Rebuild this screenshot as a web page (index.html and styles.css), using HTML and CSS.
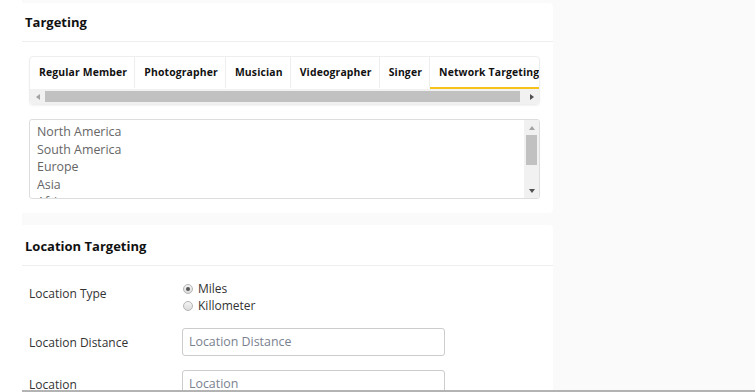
FILE: index.html
```html
<!DOCTYPE html>
<html lang="en">
<head>
    <meta charset="UTF-8">
    <meta name="viewport" content="width=device-width, initial-scale=1.0">
    <title>Targeting</title>
    <link rel="stylesheet" href="styles.css">
</head>
<body>
    <div class="side"></div>
    <div class="main">
        <div class="card">
            <div class="card-head">Targeting</div>
            <div class="card-body">
                <div class="tabs-box">
                    <div class="tabs">
                        <div class="tab">Regular Member</div>
                        <div class="tab">Photographer</div>
                        <div class="tab">Musician</div>
                        <div class="tab">Videographer</div>
                        <div class="tab">Singer</div>
                        <div class="tab active">Network Targeting</div>
                    </div>
                    <div class="hscroll">
                        <span class="arrow arrow-left"></span>
                        <span class="hthumb"></span>
                        <span class="arrow arrow-right"></span>
                    </div>
                </div>

                <div class="listbox">
                    <div class="options">
                        <div class="option">North America</div>
                        <div class="option">South America</div>
                        <div class="option">Europe</div>
                        <div class="option">Asia</div>
                        <div class="option">Africa</div>
                    </div>
                    <div class="vscroll">
                        <span class="arrow arrow-up"></span>
                        <span class="vthumb"></span>
                        <span class="vtrack"></span>
                        <span class="arrow arrow-down"></span>
                    </div>
                </div>
            </div>
        </div>

        <div class="card">
            <div class="card-head tall">Location Targeting</div>
            <div class="card-body form">
                <div class="form-row top">
                    <div class="label">Location Type</div>
                    <div class="radios">
                        <div class="radio"><span class="dot checked"></span>Miles</div>
                        <div class="radio"><span class="dot"></span>Killometer</div>
                    </div>
                </div>
                <div class="form-row">
                    <div class="label">Location Distance</div>
                    <div class="input">Location Distance</div>
                </div>
                <div class="form-row">
                    <div class="label">Location</div>
                    <div class="input">Location</div>
                </div>
            </div>
        </div>
    </div>
    <div class="bottom-edge"></div>
</body>
</html>
```

FILE: styles.css
```css
body {
    margin: 0;
    display: flex;
    height: 392px;
    overflow: hidden;
    background: #fafafa;
    font-family: "Open Sans", Arial, sans-serif;
    color: #333;
}
.side {
    width: 22px;
    background: #fff;
}
.main {
    width: 531px;
    padding-top: 3px;
}
.card {
    background: #fff;
    border-radius: 0 4px 4px 0;
    margin-bottom: 12px;
}
.card-head {
    height: 38px;
    line-height: 39px;
    padding-left: 3px;
    font-size: 13px;
    font-weight: 700;
    color: #111;
    border-bottom: 1px solid #eee;
}
.card-head.tall {
    height: 40px;
    line-height: 43px;
}
.card-body {
    padding: 14px 13px 14px 7px;
}

/* tabs */
.tabs-box {
    border: 1px solid #eee;
    border-radius: 4px;
    box-shadow: 0 1px 2px rgba(0, 0, 0, 0.05);
    overflow: hidden;
}
.tabs {
    display: flex;
    height: 32px;
}
.tab {
    padding: 0 7px 0 9px;
    line-height: 30px;
    font-size: 10.4px;
    font-weight: 700;
    letter-spacing: 0.15px;
    color: #111;
    border-right: 1px solid #eee;
    border-bottom: 2px solid transparent;
    white-space: nowrap;
}
.tab.active {
    border-right: none;
    border-bottom-color: #f6c31c;
    flex: 1;
}
.hscroll {
    display: flex;
    align-items: center;
    height: 15px;
    background: #f1f1f1;
}
.hthumb {
    flex: 1;
    height: 11px;
    background: #c1c1c1;
    margin-right: 4px;
}
.arrow {
    width: 15px;
    height: 15px;
    display: flex;
    align-items: center;
    justify-content: center;
}
.arrow::before {
    content: "";
    border: 3px solid transparent;
}
.arrow-left::before {
    border-right: 4px solid #a3a3a3;
    border-left: none;
}
.arrow-right::before {
    border-left: 4px solid #505050;
    border-right: none;
}
.arrow-up::before {
    border-bottom: 4px solid #a3a3a3;
    border-top: none;
}
.arrow-down::before {
    border-top: 4px solid #505050;
    border-bottom: none;
}

/* list */
.listbox {
    display: flex;
    margin-top: 14px;
    height: 80px;
    box-sizing: border-box;
    border: 1px solid #ddd;
    border-radius: 3px;
    overflow: hidden;
}
.options {
    flex: 1;
    padding: 3px 7px;
    overflow: hidden;
}
.option {
    font-size: 12.4px;
    line-height: 17.5px;
    color: #666;
}
.vscroll {
    width: 15px;
    display: flex;
    flex-direction: column;
    background: #f1f1f1;
}
.vthumb {
    height: 30px;
    margin: 0 2px;
    background: #c1c1c1;
}
.vtrack {
    flex: 1;
}

/* form */
.form {
    padding-top: 14px;
    padding-bottom: 0;
}
.form-row {
    display: flex;
    align-items: center;
    margin-bottom: 14px;
}
.form-row.top {
    align-items: flex-start;
}
.form-row.top .label {
    padding-top: 5px;
}
.label {
    width: 153px;
    font-size: 12px;
    color: #333;
}
.radios {
    font-size: 12px;
    color: #333;
    padding-left: 1px;
}
.radio {
    display: flex;
    align-items: center;
    height: 17px;
}
.dot {
    width: 8px;
    height: 8px;
    border: 1px solid #b5b5b5;
    border-radius: 50%;
    background: linear-gradient(#f4f4f4, #dcdcdc);
    margin-right: 5px;
    display: flex;
    align-items: center;
    justify-content: center;
}
.dot.checked::before {
    content: "";
    width: 4px;
    height: 4px;
    border-radius: 50%;
    background: #555;
}
.input {
    width: 255px;
    height: 26px;
    line-height: 26px;
    padding-left: 6px;
    border: 1px solid #ccc;
    border-radius: 3px;
    font-size: 12.4px;
    color: #7a8190;
}
.bottom-edge {
    position: fixed;
    left: 22px;
    right: 0;
    bottom: 0;
    height: 2px;
    background: #b3b3b3;
}
```
